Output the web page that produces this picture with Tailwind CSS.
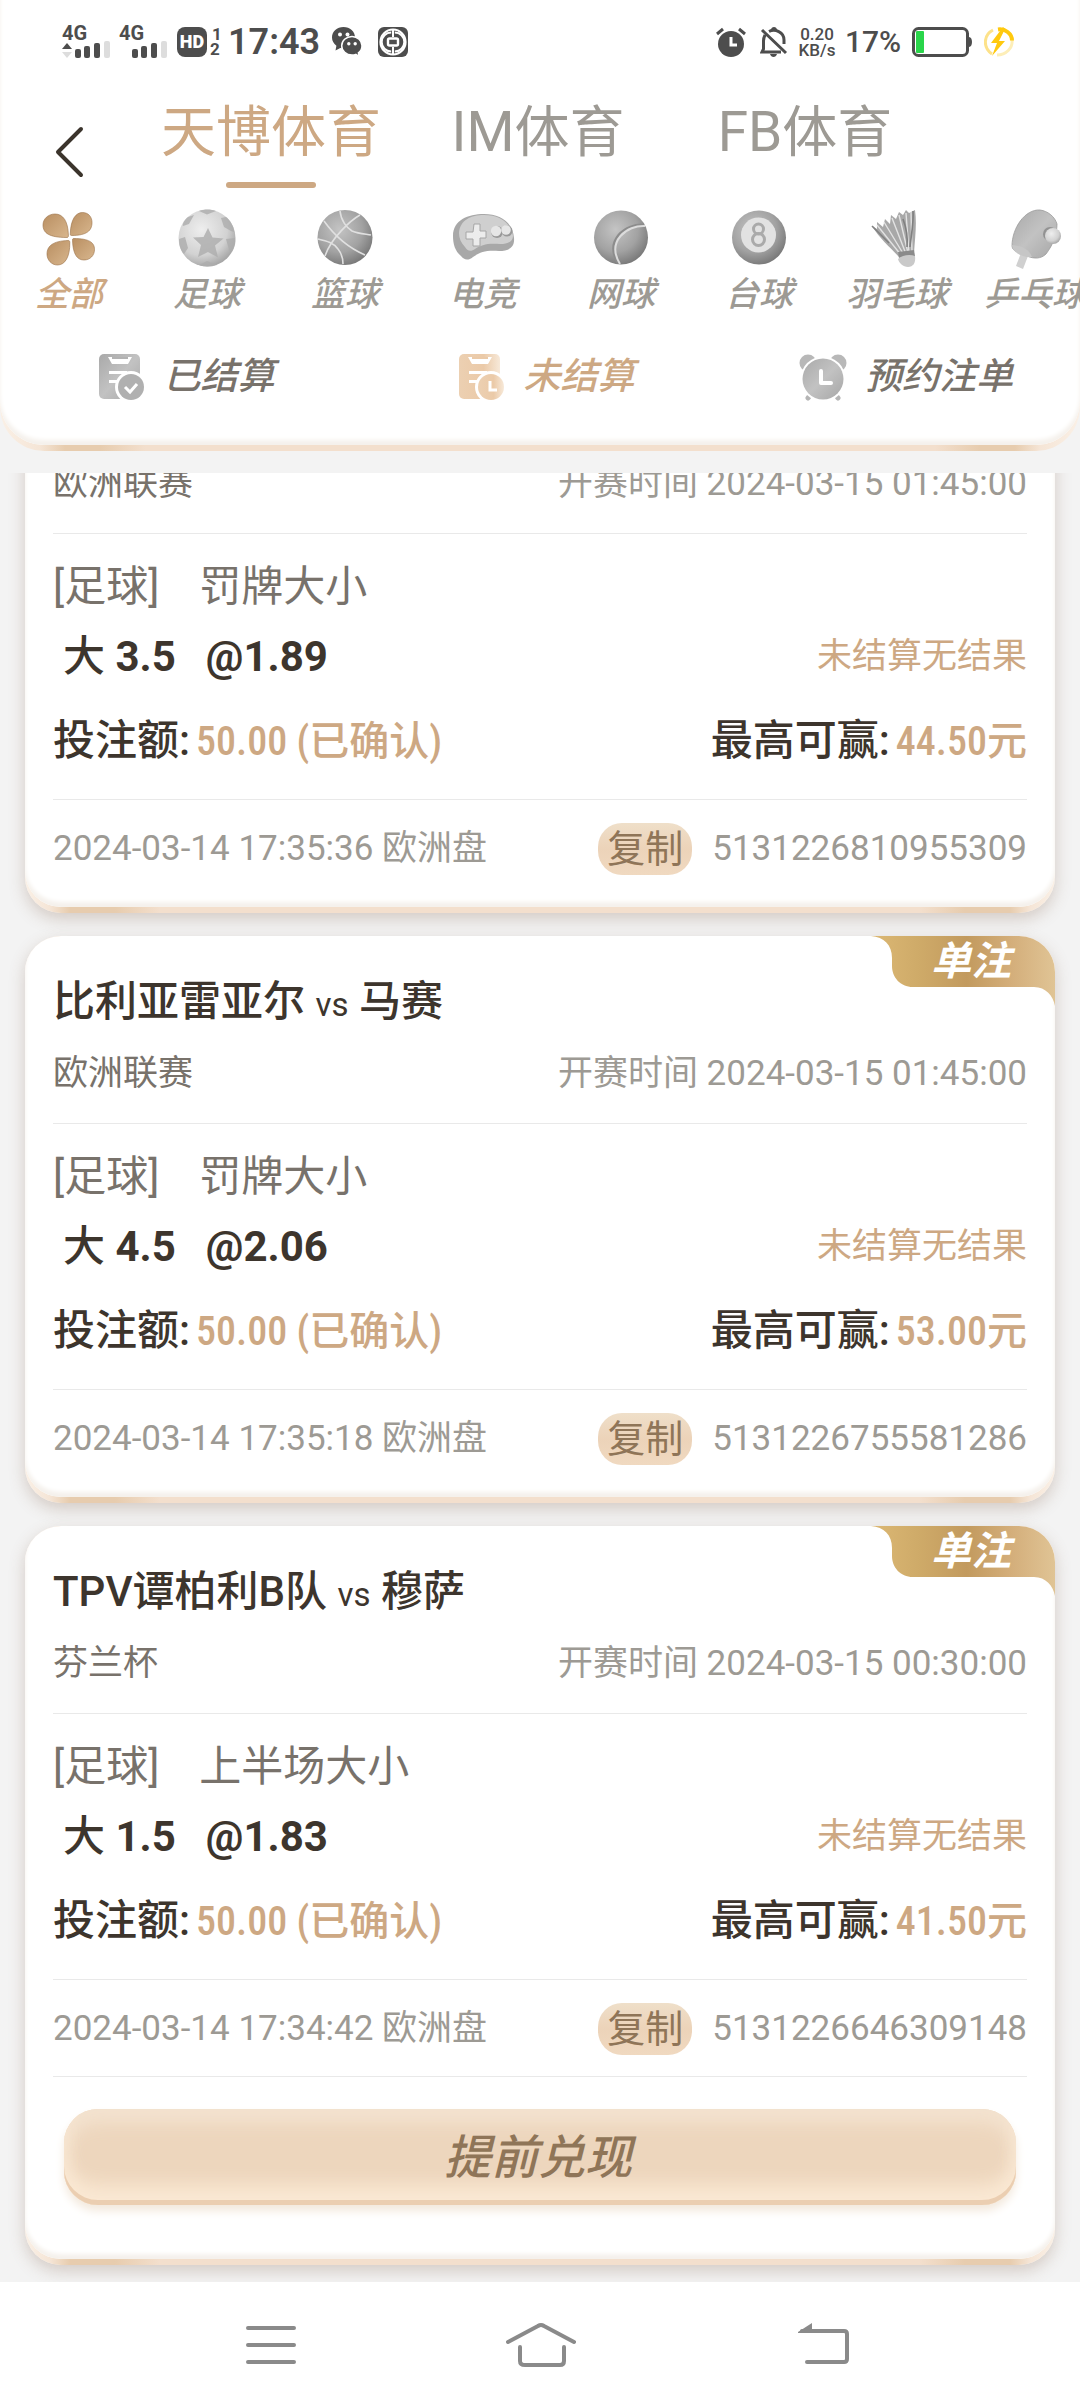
<!DOCTYPE html>
<html lang="zh-CN">
<head>
    <meta charset="UTF-8">
    <meta name="viewport" content="width=device-width, initial-scale=1.0">
    <title>注单记录</title>
    <script src="https://cdn.jsdelivr.net/npm/@tailwindcss/browser@4"></script>
</head>
<body class="h-screen flex flex-col bg-[#f3f3f3] text-[#3d352d] font-['Roboto','Noto_Sans_CJK_SC',sans-serif]">
    <!-- Shared gradients -->
    <svg class="absolute w-0 h-0" aria-hidden="true">
        <defs>
            <radialGradient id="ball" cx="0.4" cy="0.35" r="0.7"><stop offset="0" stop-color="#c4c4c4"/><stop offset="0.6" stop-color="#a2a2a2"/><stop offset="1" stop-color="#757575"/></radialGradient>
            <radialGradient id="lightBall" cx="0.4" cy="0.35" r="0.7"><stop offset="0" stop-color="#eeeeee"/><stop offset="0.65" stop-color="#d2d2d2"/><stop offset="1" stop-color="#a0a0a0"/></radialGradient>
            <linearGradient id="gold" x1="0" y1="0" x2="1" y2="1"><stop offset="0" stop-color="#b98f62"/><stop offset="1" stop-color="#d8b68d"/></linearGradient>
            <linearGradient id="gray" x1="0" y1="0" x2="1" y2="1"><stop offset="0" stop-color="#a9a9a9"/><stop offset="0.5" stop-color="#c2c2c2"/><stop offset="1" stop-color="#a6a6a6"/></linearGradient>
            <linearGradient id="peach" x1="0" y1="0" x2="1" y2="0"><stop offset="0" stop-color="#ecd0b2"/><stop offset="0.6" stop-color="#ebcaa8"/><stop offset="1" stop-color="#f7e9d9"/></linearGradient>
            <linearGradient id="ribbon" x1="0" y1="0" x2="1" y2="0"><stop offset="0" stop-color="#dcb874"/><stop offset="0.25" stop-color="#cfab69"/><stop offset="0.52" stop-color="#c29a5e"/><stop offset="0.75" stop-color="#d3ad79"/><stop offset="1" stop-color="#e0c495"/></linearGradient>
        </defs>
    </svg>

    <!-- Header -->
    <header class="shrink-0 rounded-b-[44px] pb-[6px] bg-[linear-gradient(90deg,#faf0e6_0,#f5e5d6_40px,#e7ccae_65px,#e7ccae_100px,#f3dfcd_145px,#f3dfcd_calc(100%-145px),#e7ccae_calc(100%-100px),#e7ccae_calc(100%-65px),#f5e5d6_calc(100%-40px),#faf0e6_100%)]">
        <div class="bg-white rounded-b-[44px] pb-[41px] shadow-[inset_0_-5px_4px_#f5f1ec]">
            <!-- Status Bar -->
            <div class="h-[84px] flex items-center justify-between pl-[62px] pr-[66px] text-[#4d4d4d]">
                <div class="flex items-center">
                    <div class="flex flex-col w-[57px]">
                        <span class="text-[20px] leading-4 font-bold">4G</span>
                        <svg class="w-12 h-[18px]" viewBox="0 0 48 18" fill="#4d4d4d">
                            <path d="M0 8 5 2l5 6z"/><path fill="#ddd" d="M0 11h10l-5 6z"/>
                            <rect x="13" y="8" width="6" height="9" rx="2"/><rect x="22" y="5" width="6" height="12" rx="2"/><rect x="32" y="2" width="6" height="15" rx="2"/><rect x="42" y="0" width="6" height="17" rx="2" fill="#ddd"/>
                        </svg>
                    </div>
                    <div class="flex flex-col w-[58px]">
                        <span class="text-[20px] leading-4 font-bold">4G</span>
                        <svg class="w-12 h-[18px]" viewBox="0 0 48 18" fill="#4d4d4d">
                            <rect x="13" y="8" width="6" height="9" rx="2"/><rect x="22" y="5" width="6" height="12" rx="2"/><rect x="32" y="2" width="6" height="15" rx="2"/><rect x="42" y="0" width="6" height="17" rx="2" fill="#ddd"/>
                        </svg>
                    </div>
                    <span class="w-[30px] h-[30px] rounded-lg bg-[#4d4d4d] text-white text-[18px] leading-[30px] font-black text-center">HD</span>
                    <span class="w-[21px] flex flex-col pl-[3px] text-[17px] leading-[15px] font-bold"><span class="pl-[2px]">1</span><span>2</span></span>
                    <span class="w-[104px] text-[36px] leading-10 font-semibold">17:43</span>
                    <svg class="w-[30px] h-[30px]" viewBox="0 0 30 30">
                        <path fill="#4d4d4d" d="M11.500 0C5 0 0 4.600 0 10.500c0 3.400 1.700 6.200 4.400 8.200L3.500 23.500l4.800-2.600c5 1 9-.5 11.500-3.300C22 15.300 23 12.500 23 10.500 23 4.600 18 0 11.500 0z"/>
                        <circle cx="8" cy="7.500" r="2" fill="#fff"/><circle cx="15.500" cy="7.500" r="2" fill="#fff"/>
                        <path fill="#4d4d4d" stroke="#fff" stroke-width="1.500" d="M20 9.500c-6 0-10.300 4.200-10.300 9.200 0 5.200 4.500 9.300 10.300 9.300 1.400 0 2.600-.2 3.800-.6l3.400 2-.8-3.500c2.600-2 3.600-4.400 3.600-7.200 0-5-4.500-9.200-10-9.200z"/>
                        <circle cx="16.800" cy="16.800" r="1.700" fill="#fff"/><circle cx="23.200" cy="16.800" r="1.700" fill="#fff"/>
                    </svg>
                    <svg class="w-[30px] h-[30px] ml-4" viewBox="0 0 30 30" fill="none" stroke="#fff">
                        <rect width="30" height="30" rx="6" fill="#4d4d4d" stroke="none"/>
                        <circle cx="15" cy="15" r="12.500" stroke-width="2.200"/>
                        <path stroke-width="2" d="M13.200 5.500A9.500 9.500 0 0 0 13.200 24.500M16.800 5.500a9.500 9.500 0 0 1 0 19M15 3v7M15 20v7"/>
                        <rect x="10" y="11.500" width="10" height="7" rx="1.500" stroke-width="2.400"/>
                    </svg>
                </div>
                <div class="flex items-center">
                    <svg class="w-[30px] h-[30px]" viewBox="0 0 30 30">
                        <circle cx="15" cy="17" r="13" fill="#4d4d4d"/><path fill="none" stroke="#4d4d4d" stroke-width="3" d="M1 7l6-5M29 7l-6-5"/><path fill="none" stroke="#fff" stroke-width="3" d="M15 10v8h6"/>
                    </svg>
                    <svg class="w-[28px] h-[30px] ml-[14px]" viewBox="0 0 28 30" fill="none" stroke="#4d4d4d" stroke-width="3">
                        <path d="M2 3l24 23M5 8c-1 2-1.500 4-1.500 6v8L2 25h19M9 4.500C15 1.500 24 5 24 13v4"/><path fill="#4d4d4d" stroke="none" d="M11 3c0-4 6-4 6 0zM10 27h7c-1 4-6 4-7 0z"/>
                    </svg>
                    <span class="w-[46px] ml-[6px] flex flex-col text-center text-[17px] leading-4 font-medium"><span>0.20</span><span>KB/s</span></span>
                    <span class="w-[72px] pl-[5px] text-[30px] leading-10 font-medium">17%</span>
                    <svg class="w-[62px] h-[30px]" viewBox="0 0 62 30">
                        <rect x="1.500" y="1.500" width="54" height="27" rx="5" fill="none" stroke="#4d4d4d" stroke-width="3"/><rect x="4" y="4" width="8" height="22" rx="1" fill="#29d54a"/><path fill="#4d4d4d" d="M57 10c4 0 4 10 0 10z"/>
                    </svg>
                    <svg class="w-[30px] h-[30px] ml-[10px]" viewBox="0 0 30 30">
                        <path fill="none" stroke="#fde28a" stroke-width="3" d="M9 3C-1 8-1 21 8 27"/><path fill="none" stroke="#fdeeb8" stroke-width="3" d="M13 28c9 0 16-7 15-15"/><path fill="none" stroke="#ffc90e" stroke-width="4" d="M14 2.500c7-1 14 4 14 11"/>
                        <path fill="#ffc90e" d="M19 0 7 16h6L8 29l13-15h-6l6-12z"/>
                    </svg>
                </div>
            </div>

            <!-- Venue Tabs -->
            <div class="flex h-[122px] items-start">
                <button aria-label="返回" class="w-[157px] h-[120px] pl-[52px] pt-4">
                    <svg class="w-9 h-[54px]" viewBox="0 0 36 54" fill="none" stroke="#3b342c" stroke-width="4" stroke-linecap="round" stroke-linejoin="round"><path d="M29 4 6 27l23 23"/></svg>
                </button>
                <nav class="flex text-[55px] leading-[72px] pt-3 text-[#9d9a94]">
                    <a href="#" class="w-[228px] flex flex-col items-center text-[#cda883]">天博体育<span class="w-[90px] h-[6px] mt-[14px] rounded-full bg-[#cda883]"></span></a>
                    <a href="#" class="w-[306px] text-center">IM体育</a>
                    <a href="#" class="w-[228px] text-center">FB体育</a>
                </nav>
            </div>

            <!-- Sport Categories -->
            <nav class="flex overflow-hidden text-[34px] leading-[48px] font-medium italic text-[#9d9a94] whitespace-nowrap">
                <a href="#" class="w-[138px] shrink-0 flex flex-col items-center text-[#cda883]">
                    <svg class="w-16 h-16" viewBox="0 0 64 64" fill="url(#gold)" stroke="#9a7147" stroke-width="0.600">
                        <path d="M30 31.500c1 0 1.500-.6 1.400-2.500C31 15 26 8 18 8 11 8 6 13 6 19c0 8 6 12.500 24 12.500z"/>
                        <path d="M34.500 29.500c-1 0-1.300-.5-1.200-2C33.800 13 39 6.500 45.500 6.500 51 6.500 55 10.500 55 16.500c0 8-5 13-20.500 13z"/>
                        <path d="M31 34.500c1.300 0 1.800.5 1.800 2C33 51 28 59 20.500 59 14.500 59 10 54 10 48c0-8 6-13 21-13.500z"/>
                        <path d="M37 32.500c-1.300 0-1.600.6-1.500 2C36 48 40 54 47 54c6 0 10.500-4.500 10.500-10.500 0-7-5.500-11-20.500-11z"/>
                    </svg>
                    全部
                </a>
                <a href="#" class="w-[138px] shrink-0 flex flex-col items-center">
                    <svg class="w-16 h-16" viewBox="0 0 64 64">
                        <circle cx="32" cy="32" r="28.500" fill="url(#lightBall)"/>
                        <path fill="#adadad" fill-opacity="0.800" d="M33 22l4.500 9.500 11 1-8.500 7 3 12-10-5.500-10 5 3-12-8-7.500 10.500-.5zM8 20l6-2 5-9-6 2c-4 3-6 8-5 9zM24 5l8 3.500L41 5c-5-2-12-2-17 0zM51 11l-5 1 3 9 7 4 3 1c0-6-4-12-8-15zM60 32l-9 1 3 11 3 2c3-5 4-9 3-14zM4 33l6-2 3 11-4 6c-4-4-5-10-5-15zM24 59l8-4 10 4c-6 2-12 2-18 0z"/>
                    </svg>
                    足球
                </a>
                <a href="#" class="w-[138px] shrink-0 flex flex-col items-center">
                    <svg class="w-16 h-16" viewBox="0 0 64 64" fill="none" stroke="#e0e0e0" stroke-width="1.600">
                        <circle cx="32" cy="31.500" r="27.500" fill="url(#ball)" stroke="none"/>
                        <path d="M27 5c1 10 7 17 12 20 7 3 14 3 19 4M47 9C38 14 18 32 12 50M11 15c10 14 25 27 41 34M5 33c9 2 16 4 20 10 4 5 5 10 5 15"/>
                    </svg>
                    篮球
                </a>
                <a href="#" class="w-[138px] shrink-0 flex flex-col items-center">
                    <svg class="w-16 h-16" viewBox="0 0 64 64">
                        <path fill="#a8a8a8" d="M2 30C2 14 17 8 33 8c17 0 29 9 30 24 1 10-6 13-15 13-13-1-19 1-26 6-5 4-9 3-12-1C4 45 2 38 2 30z"/>
                        <path fill="#cfcfcf" d="M8 27C9 14 20 9 33 9c16 0 27 8 29 21 0 6-6 8-13 8-13-1-19 1-25 5-4 3-8 2-10-2-4-4-6-9-6-14z"/>
                        <path fill="#ececec" stroke="#a6a6a6" stroke-width="1" d="M23 18h6v7h6v7h-6v8h-7v-7h-7v-7h7z"/>
                        <circle cx="46" cy="26" r="6" fill="#999"/><circle cx="56" cy="25" r="5.500" fill="#999"/><circle cx="45" cy="25" r="5.200" fill="#e6e6e6"/><circle cx="55" cy="24" r="4.800" fill="#e6e6e6"/>
                    </svg>
                    电竞
                </a>
                <a href="#" class="w-[138px] shrink-0 flex flex-col items-center">
                    <svg class="w-16 h-16" viewBox="0 0 64 64" fill="none">
                        <circle cx="32" cy="31.500" r="27" fill="url(#ball)"/>
                        <path stroke="#8c8c8c" stroke-width="3" d="M55 19C36 18 16 34 29 57"/><path stroke="#dcdcdc" stroke-width="2" d="M56 20C38 19 17 35 31 58"/>
                    </svg>
                    网球
                </a>
                <a href="#" class="w-[138px] shrink-0 flex flex-col items-center">
                    <svg class="w-16 h-16" viewBox="0 0 64 64">
                        <circle cx="32" cy="31.500" r="27" fill="url(#ball)"/><circle cx="31.500" cy="29" r="17.500" fill="#e2e2e2"/>
                        <g fill="none" stroke="#aaa" stroke-width="3"><circle cx="31.500" cy="23" r="5"/><circle cx="31.500" cy="33.500" r="6"/></g>
                    </svg>
                    台球
                </a>
                <a href="#" class="w-[138px] shrink-0 flex flex-col items-center">
                    <svg class="w-16 h-16" viewBox="0 0 64 64">
                        <path fill="#a8a8a8" d="M7 20l5 3 0-7 6 5 2-8 5 5 1-9 5 4 3-7 4 3 3-5 3 3 6-3c2 14 0 28-1 43l-15 4C25 41 15 33 7 20z"/>
                        <path fill="none" stroke="#e2e2e2" stroke-width="1.400" d="M12 19l24 30M19 16l20 33M27 12l14 36M34 9l9 38M41 7l3 40M46 6l1 40"/>
                        <path fill="none" stroke="#808080" stroke-width="1.600" d="M48 5c1 10-2 26-3 36M38 13c3 8 5 18 4 28M7 20l17 17"/>
                        <path fill="#8a8a8a" d="M33 46l16-2 1 6-16 2z"/><path fill="#c9c9c9" d="M33 53c4-4 12-5 17-3 1 7-2 11-7 11-5 0-9-4-10-8z"/>
                    </svg>
                    羽毛球
                </a>
                <a href="#" class="w-[138px] shrink-0 flex flex-col items-center">
                    <svg class="w-16 h-16" viewBox="0 0 64 64">
                        <path fill="#d0d0d0" d="M18 47l7 3-5 13-7-3z"/>
                        <path fill="url(#gray)" stroke="#999" stroke-width="0.800" d="M9 40C9 22 22 3 37 4c8 1 15 7 17 14 0 10-4 21-11 30-5 5-12 5-19 2-5-3-15-4-15-10z"/>
                        <path fill="#c6c6c6" d="M9 39c10 1 17 4 20 12-8 1-20-4-20-12z"/>
                        <circle cx="47" cy="28" r="7" fill="#777" fill-opacity="0.600"/><circle cx="50" cy="30" r="8" fill="url(#lightBall)"/>
                    </svg>
                    乒乓球
                </a>
            </nav>

            <!-- Settlement Filter -->
            <div class="flex mt-8 text-[37px] leading-[54px] font-medium italic text-[#78726b]">
                <button class="flex-1 flex items-center justify-center gap-[18px] pl-3">
                    <svg class="w-12 h-12" viewBox="0 0 48 48">
                        <rect x="1" y="1" width="41" height="45" rx="5" fill="url(#gray)"/>
                        <path fill="#fff" d="M10 4h24l-4 7H14zM11 18h18v3H11zM11 27h9v3h-9z"/><path fill="#b3b3b3" d="M14 4h16v2H14z"/>
                        <circle cx="33" cy="34" r="16" fill="#fff"/><circle cx="33" cy="34" r="13" fill="#b0b0b0"/><path fill="none" stroke="#fff" stroke-width="3" d="M27 34l5 5 7-8"/>
                    </svg>
                    已结算
                </button>
                <button class="flex-1 flex items-center justify-center gap-[18px] pl-3 text-[#cda883]">
                    <svg class="w-12 h-12" viewBox="0 0 48 48">
                        <rect x="1" y="1" width="41" height="45" rx="5" fill="url(#peach)"/>
                        <path fill="#fff" d="M10 4h24l-4 7H14zM11 18h18v3H11zM11 27h9v3h-9z"/><path fill="#ebcaa8" d="M14 4h16v2H14z"/>
                        <circle cx="33" cy="34" r="16" fill="#fff"/><circle cx="33" cy="34" r="13" fill="url(#peach)"/><path fill="none" stroke="#fff" stroke-width="3" d="M32 28v9h7"/>
                    </svg>
                    未结算
                </button>
                <button class="flex-1 flex items-center justify-center gap-[18px] pl-3">
                    <svg class="w-12 h-12" viewBox="0 0 48 48">
                        <path fill="none" stroke="#b5b5b5" stroke-width="5" stroke-linecap="round" d="M12 41l-3 4M36 41l3 4"/>
                        <circle cx="9" cy="10" r="8.500" fill="#b8b8b8"/><circle cx="39" cy="10" r="8.500" fill="#b8b8b8"/>
                        <circle cx="24" cy="26" r="22.500" fill="#fff"/><circle cx="24" cy="26" r="20.500" fill="url(#gray)"/><path fill="none" stroke="#fff" stroke-width="4" stroke-linecap="round" stroke-linejoin="round" d="M22 18v12h10"/>
                    </svg>
                    预约注单
                </button>
            </div>
        </div>
    </header>

    <!-- Bet List, opens scrolled to its end -->
    <main class="flex-1 min-h-0 mt-[22px] px-[25px] flex flex-col-reverse overflow-y-auto [scrollbar-width:none]">
        <div id="betList" class="shrink-0 flex flex-col gap-[23px] pt-5 pb-[17px]"></div>
    </main>

    <!-- System Navigation -->
    <nav class="shrink-0 h-[126px] bg-white flex items-center justify-center gap-[204px]">
        <button aria-label="最近任务"><svg class="block w-[72px] h-12" viewBox="0 0 72 48" fill="none" stroke="#8a8a8a" stroke-width="4" stroke-linecap="round"><path d="M20 7h46M20 24h46M20 41h46"/></svg></button>
        <button aria-label="主屏幕"><svg class="block w-[72px] h-12" viewBox="0 0 72 48" fill="none" stroke="#8a8a8a" stroke-width="4" stroke-linecap="round" stroke-linejoin="round"><path d="M4 21 34 5q3-2 6 0l30 16M16 26v14q0 4 5 4h35q4 0 4-4V26"/></svg></button>
        <button aria-label="返回上一页"><svg class="block w-[72px] h-12" viewBox="0 0 72 48" fill="none" stroke="#8a8a8a" stroke-width="4" stroke-linecap="round" stroke-linejoin="round"><path d="M22 10h42q3 0 3 3v25q0 3-3 3H27"/><path fill="#8a8a8a" stroke="none" d="M18 11 32 2v10H18z"/></svg></button>
    </nav>

    <script>
    const bets = [
        { home: '比利亚雷亚尔', away: '马赛', league: '欧洲联赛', start: '2024-03-15 01:45:00', market: '罚牌大小', side: '大', line: '3.5', odds: '1.89', win: '44.50', time: '2024-03-14 17:35:36', id: '5131226810955309' },
        { home: '比利亚雷亚尔', away: '马赛', league: '欧洲联赛', start: '2024-03-15 01:45:00', market: '罚牌大小', side: '大', line: '4.5', odds: '2.06', win: '53.00', time: '2024-03-14 17:35:18', id: '5131226755581286' },
        { home: 'TPV谭柏利B队', away: '穆萨', league: '芬兰杯', start: '2024-03-15 00:30:00', market: '上半场大小', side: '大', line: '1.5', odds: '1.83', win: '41.50', time: '2024-03-14 17:34:42', id: '5131226646309148', cashOut: true }
    ];

    function renderBet(bet) {
        const cashOut = `
            <div class="border-t border-[#e9e9e9] mt-[21px] pt-8 px-[11px] pb-[22px]">
                <button class="w-full h-24 pt-[3px] pr-1 rounded-[34px] text-[47px] font-medium italic text-[#8f7558] bg-[#edd6bd] shadow-[inset_0_-5px_0_#ebceb1,inset_0_-20px_18px_#fae8d3,inset_0_14px_18px_#f3e2cf,inset_0_0_18px_#f5e3cd,0_6px_10px_#f3e9dd]">提前兑现</button>
            </div>`;
        return `
        <article class="rounded-[36px] pb-[6px] shadow-[0_6px_16px_#78553c40] bg-[linear-gradient(90deg,#faf0e6_0,#f5e5d6_25px,#e7ccae_45px,#e7ccae_90px,#f3dfcd_135px,#f3dfcd_calc(100%-135px),#e7ccae_calc(100%-90px),#e7ccae_calc(100%-45px),#f5e5d6_calc(100%-25px),#faf0e6_100%)]">
            <div class="relative bg-white rounded-[36px] px-7 pt-8 pb-8 shadow-[inset_0_-5px_4px_#f5f1ec]">
                <div class="absolute top-0 right-0 w-[184px] h-[70px]">
                    <svg class="absolute inset-0 w-full h-full" viewBox="0 0 184 70" fill="url(#ribbon)"><path d="M0 0h148a36 36 0 0 1 36 36v34c-2-10-9-19-21-19H42C29 51 21 41 21 30V22C21 9 13 1 0 0z"/></svg>
                    <span class="relative block pl-[60px] text-[40px] leading-[52px] font-bold italic text-white">单注</span>
                </div>
                <h2 class="h-16 text-[42px] leading-[68px] font-medium">${bet.home} <span class="text-[33px] font-normal">vs</span> ${bet.away}</h2>
                <div class="flex justify-between h-[76px] mt-4 border-b border-[#e9e9e9] text-[35px] leading-[52px] text-[#9d9a94]">
                    <span class="text-[#78726b]">${bet.league}</span>
                    <span>开赛时间 ${bet.start}</span>
                </div>
                <div class="flex gap-10 h-[82px] pt-6 text-[42px] leading-[58px] text-[#78726b]">
                    <span>[足球]</span>
                    <span>${bet.market}</span>
                </div>
                <div class="flex items-center h-[58px] mt-3 pl-[10px] text-[42px] leading-[58px] font-bold">
                    <span class="mr-[30px]"><span class="font-medium">${bet.side}</span> ${bet.line}</span>
                    <span>@${bet.odds}</span>
                    <span class="ml-auto text-[35px] font-normal text-[#cda883]">未结算无结果</span>
                </div>
                <div class="flex justify-between h-[90px] mt-6 border-b border-[#e9e9e9] text-[42px] leading-[62px] font-medium">
                    <div>投注额:<span class="ml-[6px] text-[40px] text-[#cda883] font-['Roboto_Condensed','Noto_Sans_CJK_SC',sans-serif]">50.00 (已确认)</span></div>
                    <div>最高可赢:<span class="ml-[6px] text-[40px] text-[#cda883] font-['Roboto_Condensed','Noto_Sans_CJK_SC',sans-serif]">${bet.win}元</span></div>
                </div>
                <div class="flex items-center h-[75px] pt-[23px] text-[35px] leading-[52px] text-[#9d9a94]">
                    <span class="mr-auto">${bet.time} 欧洲盘</span>
                    <button data-copy="${bet.id}" class="w-[94px] h-[52px] mr-5 rounded-3xl text-[38px] leading-[52px] text-[#8f7558] bg-linear-to-b from-[#efdfc9] via-[#ecd3b9] to-[#f0d9c0]">复制</button>
                    <span>${bet.id}</span>
                </div>
                ${bet.cashOut ? cashOut : ''}
            </div>
        </article>`;
    }

    document.getElementById('betList').innerHTML = bets.map(renderBet).join('');

    document.querySelectorAll('[data-copy]').forEach(btn => {
        btn.addEventListener('click', () => navigator.clipboard.writeText(btn.dataset.copy));
    });
    </script>
</body>
</html>
